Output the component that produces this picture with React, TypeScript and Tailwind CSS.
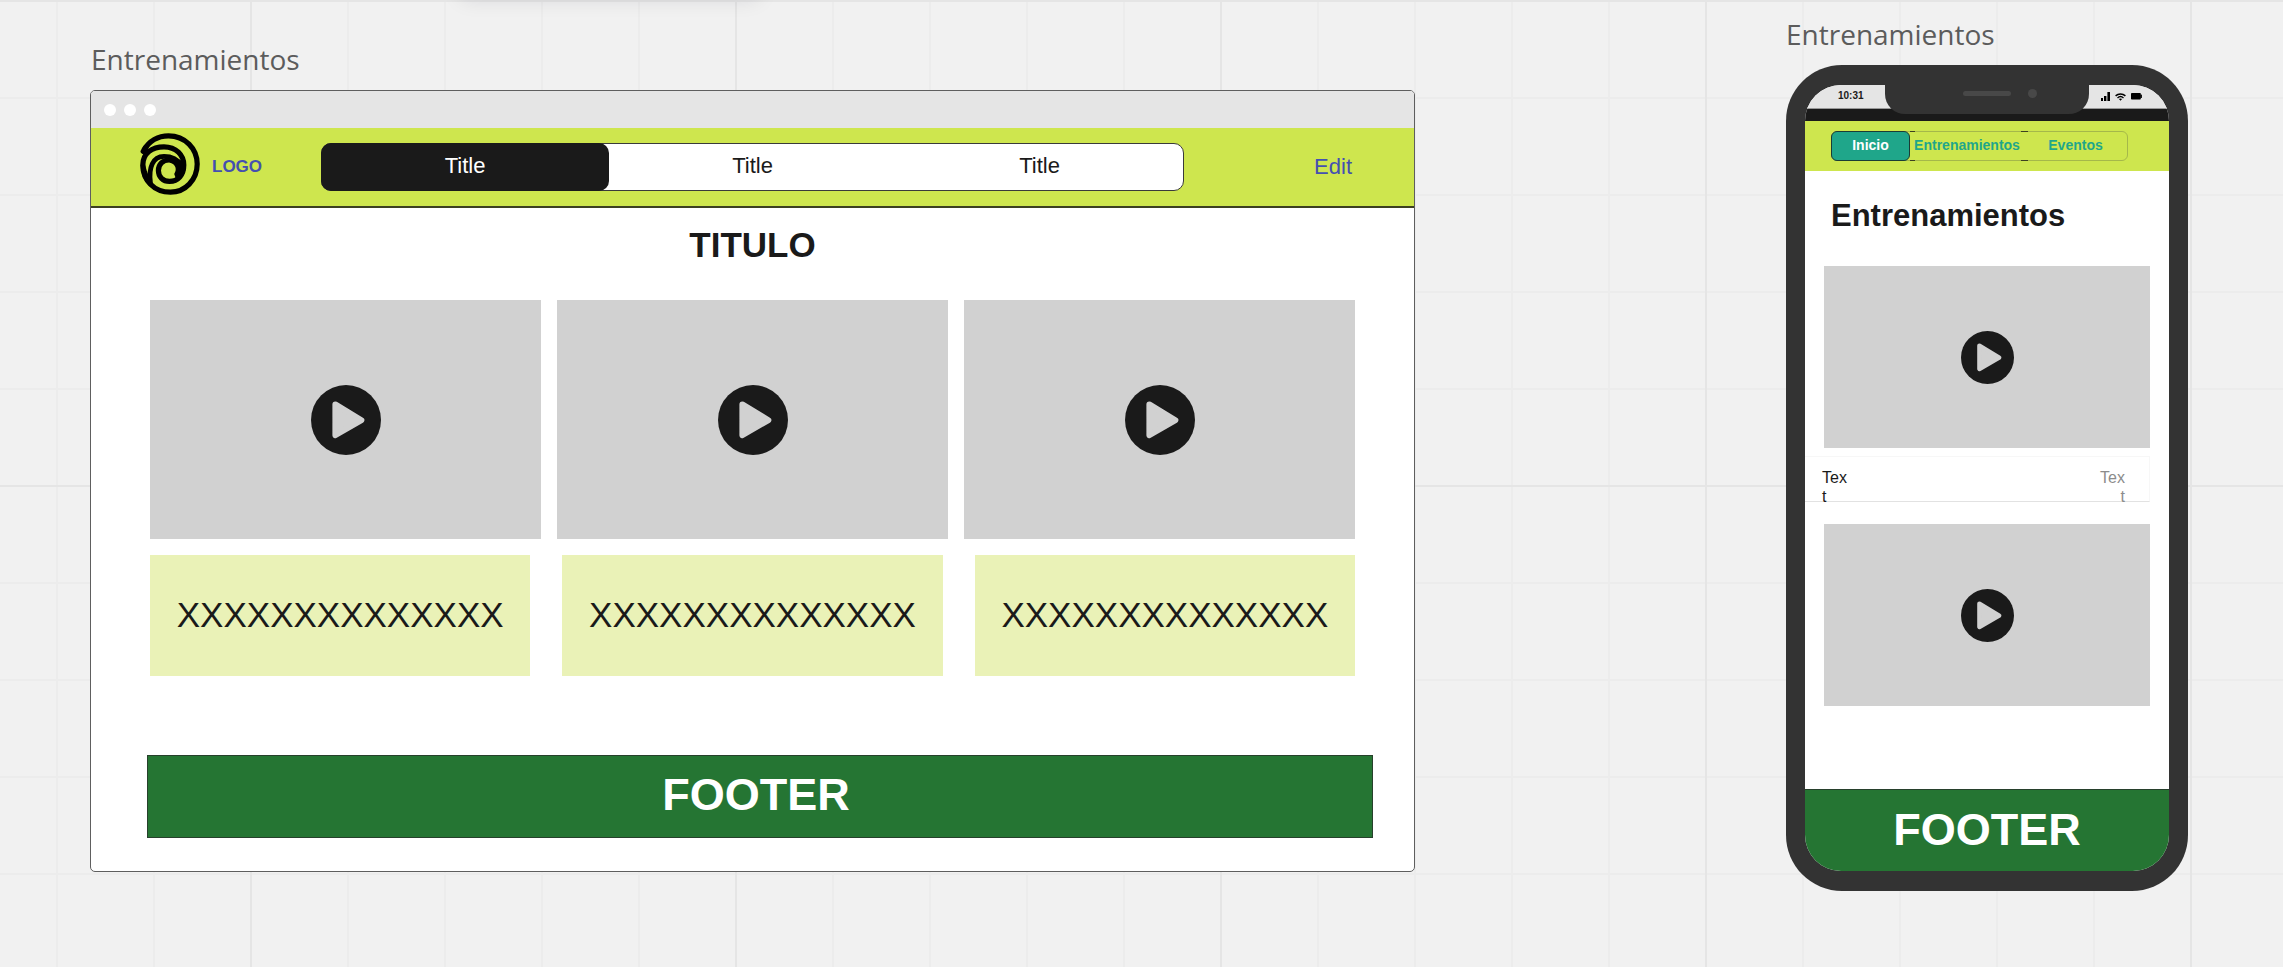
import React from "react";

const ARIAL = "font-['Liberation_Sans',Arial,sans-serif]";

function PlayIcon({ className }: { className: string }) {
  return (
    <svg viewBox="0 0 53 53" className={className} aria-hidden="true">
      <circle cx="26.5" cy="26.5" r="26.5" fill="#1a1a1a" />
      <path
        d="M18.4 14.6 L38.2 26.6 L18.4 38 Z"
        fill="#d1d1d1"
        stroke="#d1d1d1"
        strokeWidth="4.4"
        strokeLinejoin="round"
      />
    </svg>
  );
}

function SwirlLogo() {
  return (
    <svg viewBox="0 0 60 62" className="mb-[6px] h-[62px] w-[60px] shrink-0" fill="none" stroke="#000" aria-hidden="true">
      <path
        d="M3.6 17.5 C9 8 18.5 2.8 28.5 2.8 C45 2.8 57.2 15.5 57.2 31 C57.2 47 45 59.2 30.5 59.2 C14 59.2 2.8 47 2.8 32 C2.8 20.5 12 13.8 24 13.8 C36 13.8 43.8 22 43.8 32 C43.8 42 38 48.4 29.5 48.4 C23 48.4 18.4 43.8 18.4 37.5 C18.4 31 23 27 29 27"
        strokeWidth="5.2"
      />
      <path d="M3.2 18.4 L6 14.4" strokeWidth="5.2" strokeLinecap="round" />
      <path d="M10.4 49 C8.6 35 12.5 23.4 24 23.4 C32 23.4 38 27 41 32" strokeWidth="4.8" />
      <path d="M27 25.5 C38 23 46 29 45.8 35 C45.4 41 41 45 36.4 47 L34.2 41 C37 37 36.4 31 29 29.6 Z" fill="#000" stroke="none" />
      <path d="M.6 32 L5 31 C6.4 37 7.6 42 12.7 49 L15 57 C6 52 1 44 .6 32 Z" fill="#000" stroke="none" />
    </svg>
  );
}

function SignalIcon() {
  return (
    <svg viewBox="0 0 9 9" className="h-[9px] w-[9px]" aria-hidden="true">
      <path d="M0 6h2v3H0zM3 4h2.4v5H3zM6.4 0H9v9H6.4z" fill="#000" />
    </svg>
  );
}

function WifiIcon() {
  return (
    <svg viewBox="0 0 11 8" className="h-[8px] w-[11px]" fill="none" stroke="#000" aria-hidden="true">
      <path d="M.6 2.9 C3.4 .2 7.6 .2 10.4 2.9" strokeWidth="1.5" />
      <path d="M2.5 4.9 C4.2 3.3 6.8 3.3 8.5 4.9" strokeWidth="1.4" />
      <path d="M3.9 6 L5.5 7.8 L7.1 6 C6.2 5.2 4.8 5.2 3.9 6Z" fill="#000" stroke="none" />
    </svg>
  );
}

function BatteryIcon() {
  return (
    <svg viewBox="0 0 11 7" className="h-[7px] w-[11px]" aria-hidden="true">
      <rect width="9.8" height="6.6" rx=".8" fill="#000" />
      <rect x="9.4" y="1.6" width="1.5" height="3.4" rx=".6" fill="#000" />
    </svg>
  );
}

function DesktopMockup() {
  return (
    <section className="min-w-0 flex-1 pt-[39px]">
      <h2 className="mb-[11px] h-[40px] pl-px text-[28px] leading-[40px] text-[#5c5c5c]">Entrenamientos</h2>
      <div className={`overflow-hidden rounded-[5px] border border-[#5e5e5e] bg-white text-[#1a1a1a] ${ARIAL}`}>
        <div className="flex h-[37px] items-center gap-2 bg-[#e5e5e5] px-[13px]">
          <span className="size-3 rounded-full bg-white" />
          <span className="size-3 rounded-full bg-white" />
          <span className="size-3 rounded-full bg-white" />
        </div>
        <header className="flex h-20 items-center border-b-2 border-[#3c4020] bg-[#cee64e] pr-[62px] pl-[49px]">
          <a href="#" className="flex w-[181px] items-center gap-3 text-[17px] font-bold text-[#4450b0]">
            <SwirlLogo />
            <span>LOGO</span>
          </a>
          <nav className="grid h-12 min-w-0 flex-1 grid-cols-3 rounded-[10px] border border-[#3a3a3a] bg-white text-[22px]">
            <button className="-my-px -ml-px rounded-[10px] bg-[#1a1a1a] pb-1 text-white">Title</button>
            <button className="pb-1">Title</button>
            <button className="pb-1">Title</button>
          </nav>
          <a href="#" className="w-[168px] pb-0.5 text-right text-[22px] text-[#4450b0]">Edit</a>
        </header>
        <div className="px-[59px] pb-[33px]">
          <h1 className="h-[92px] pt-[17px] text-center text-[35px] leading-[40px] font-bold">TITULO</h1>
          <div className="grid grid-cols-3 gap-4">
            {[1, 2, 3].map((n) => (
              <button key={n} aria-label={`Video ${n}`} className="flex h-[239px] items-center justify-center bg-[#d1d1d1]">
                <PlayIcon className="size-[70px]" />
              </button>
            ))}
          </div>
          <div className="mt-4 grid grid-cols-3 gap-8">
            {[1, 2, 3].map((n) => (
              <p key={n} className="flex h-[121px] items-center justify-center bg-[#eaf2b7] text-[35px]">
                XXXXXXXXXXXXXX
              </p>
            ))}
          </div>
          <footer className="-mr-[18px] -ml-[3px] mt-[79px] flex h-[83px] items-center justify-center border border-[#27402c] bg-[#257533] pr-2 pb-1 text-[45px] font-bold text-white">
            FOOTER
          </footer>
        </div>
      </div>
    </section>
  );
}

function PhoneVideo({ label }: { label: string }) {
  return (
    <button aria-label={label} className="mr-[19px] ml-[19px] flex h-[182px] items-center justify-center bg-[#d1d1d1]">
      <PlayIcon className="size-[53px]" />
    </button>
  );
}

function PhoneMockup() {
  return (
    <section className="w-[402px] shrink-0 pt-[14px]">
      <h2 className="mb-[11px] h-[40px] text-[28px] leading-[40px] text-[#5c5c5c]">Entrenamientos</h2>
      <div className="rounded-[56px] bg-[#333] px-[19px] py-5">
        <div className={`relative flex flex-col overflow-hidden rounded-[36px] bg-white text-[#1a1a1a] ${ARIAL}`}>
          <div className="flex h-6 items-center justify-between border-b border-[#999] bg-[#e5e5e5] pr-[27px] pl-[33px]">
            <time className="pb-0.5 text-[10px] font-bold">10:31</time>
            <div className="flex items-center gap-[5px]">
              <SignalIcon />
              <WifiIcon />
              <BatteryIcon />
            </div>
          </div>
          <div className="absolute inset-x-[80px] top-0 flex h-[29px] justify-center rounded-b-[20px] bg-[#333]">
            <span className="mt-[6px] h-[5px] w-12 rounded-full bg-[#484848]" />
            <span className="absolute top-1 right-[52px] size-[9px] rounded-full bg-[#484848]" />
          </div>
          <div className="h-3 bg-[#1a1a1a]" />
          <header className="h-[50px] bg-[#cee64e] px-[26px] pt-[10px]">
            <nav className="mr-[15px] flex h-[30px] rounded-[6px] border border-[#a5b84a] text-[14px] font-bold text-[#1fa68a]">
              <button className="-my-px -ml-px w-[79px] rounded-[6px] border border-[#1a3c35] bg-[#1fa68a] pb-0.5 text-white">
                Inicio
              </button>
              <button className="relative w-[114px] pb-0.5">
                <span className="absolute -inset-y-px left-0 w-[5px] border-y border-[#3c4020]" />
                Entrenamientos
                <span className="absolute -inset-y-px -right-1 w-[7px] border-y border-[#3c4020]" />
              </button>
              <button className="flex-1 pb-0.5">Eventos</button>
            </nav>
          </header>
          <h1 className="h-[95px] pt-[25px] pl-[26px] text-[31px] leading-[40px] font-bold">Entrenamientos</h1>
          <PhoneVideo label="Video 1" />
          <div className="mt-2 mr-[19px] mb-[22px] flex h-[46px] justify-between border-t border-r border-b border-t-[#f7f7f7] border-r-[#f7f7f7] border-b-[#e2e2e2] pt-[11px] pr-6 pl-[17px] text-[16px] leading-[19px]">
            <p>Tex<br />t</p>
            <p className="text-right text-[#8c8c8c]">Tex<br />t</p>
          </div>
          <PhoneVideo label="Video 2" />
          <footer className="mt-[83px] flex h-[82px] items-center justify-center border-t border-[#27402c] bg-[#257533] pb-0.5 text-[45px] font-bold text-white">
            FOOTER
          </footer>
        </div>
      </div>
    </section>
  );
}

export default function App() {
  return (
    <main className="relative min-h-screen overflow-hidden bg-[#f1f1f1] bg-[linear-gradient(to_right,#e5e5e5_2px,transparent_2px),linear-gradient(to_bottom,#e5e5e5_2px,transparent_2px),linear-gradient(to_right,#ececec_2px,transparent_2px),linear-gradient(to_bottom,#ececec_2px,transparent_2px)] bg-[size:485px_485px,485px_485px,97px_97px,97px_97px] bg-[position:250px_0px,250px_0px,250px_0px,250px_0px] font-['Open_Sans','Noto_Sans',sans-serif]">
      <div className="absolute -top-5 left-[460px] h-5 w-[300px] rounded-lg shadow-[0_0_20px_#0501261a]" />
      <div className="flex justify-between pr-[95px] pl-[90px]">
        <DesktopMockup />
        <div className="w-[371px] shrink" />
        <PhoneMockup />
      </div>
    </main>
  );
}
